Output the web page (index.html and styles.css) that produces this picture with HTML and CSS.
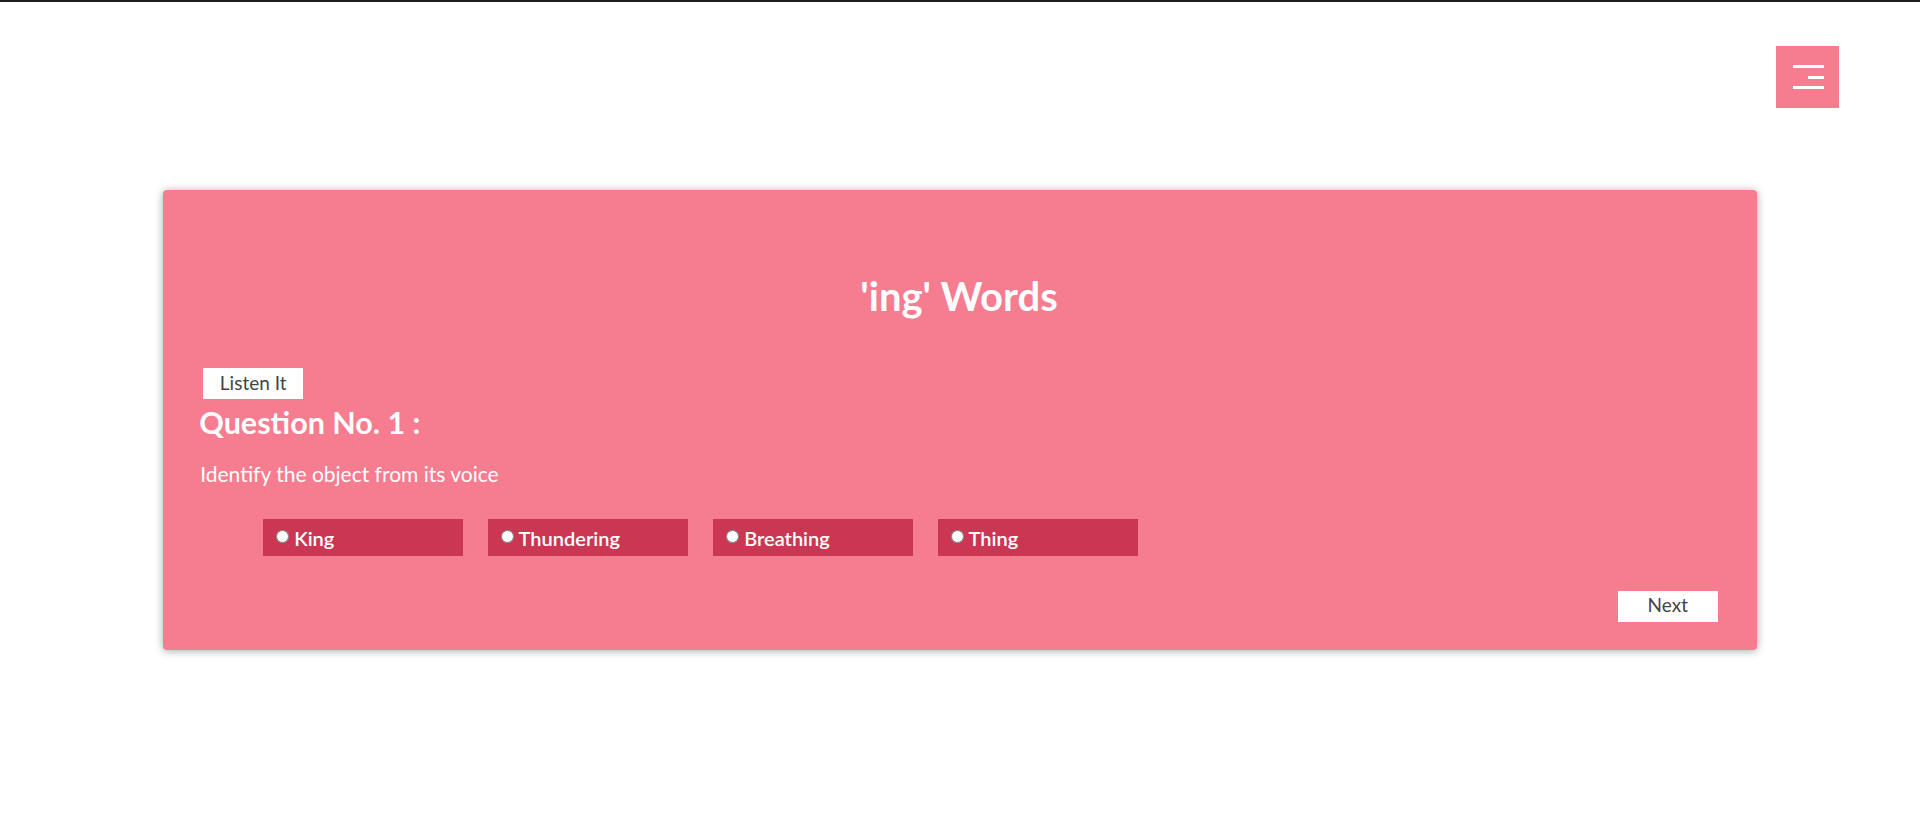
FILE: index.html
```html
<!DOCTYPE html>
<html lang="en">
<head>
<meta charset="utf-8">
<title>'ing' Words</title>
<link rel="stylesheet" href="styles.css">
</head>
<body>
<header class="topbar">
  <button class="menu-btn" aria-label="Menu">
    <svg width="62" height="62" viewBox="0 0 62 62">
      <line x1="16" y1="20.5" x2="47" y2="20.5" stroke="#fff" stroke-width="3"/>
      <line x1="31" y1="31.5" x2="47" y2="31.5" stroke="#fff" stroke-width="3"/>
      <line x1="16" y1="41.5" x2="47" y2="41.5" stroke="#fff" stroke-width="3"/>
    </svg>
  </button>
</header>
<main class="card">
  <h1 class="title">'ing' Words</h1>
  <button class="btn listen-btn">Listen It</button>
  <h2 class="question">Question No. 1 :</h2>
  <p class="prompt">Identify the object from its voice</p>
  <div class="options">
    <label class="option"><input type="radio" name="q1"> King</label>
    <label class="option"><input type="radio" name="q1"> Thundering</label>
    <label class="option"><input type="radio" name="q1"> Breathing</label>
    <label class="option"><input type="radio" name="q1"> Thing</label>
  </div>
  <div class="actions">
    <button class="btn next-btn">Next</button>
  </div>
</main>
</body>
</html>
```
FILE: styles.css
```css
* { box-sizing: border-box; }

html, body {
  margin: 0;
  padding: 0;
  background: #ffffff;
}

body {
  border-top: 2px solid #1e1e1e;
  font-family: Lato, "Open Sans", sans-serif;
  min-height: 823px;
}

.topbar {
  display: flex;
  justify-content: flex-end;
  padding: 44px 81px 0 0;
}

.menu-btn {
  width: 63px;
  height: 62px;
  padding: 0;
  border: none;
  background: #f67c8f;
  display: flex;
  align-items: center;
  justify-content: center;
  cursor: pointer;
}

.menu-btn svg { display: block; }

.card {
  width: 83%;
  margin: 82px auto 0;
  background: #f67c8f;
  border-radius: 4px;
  box-shadow: 0 1px 9px rgba(0, 0, 0, 0.35);
  padding: 82px 39px 28px 37px;
  color: #ffffff;
}

.title {
  margin: 0;
  font-size: 40px;
  line-height: 1.2;
  font-weight: 700;
  text-align: center;
}

.btn {
  background: #ffffff;
  color: #444444;
  border: none;
  height: 31px;
  width: 100px;
  padding: 0 0 3px;
  font-family: Lato, "Open Sans", sans-serif;
  font-size: 19px;
  cursor: pointer;
}

.listen-btn {
  display: block;
  margin: 48px 0 0 3px;
}

.question {
  margin: 5px 0 0 -1px;
  font-size: 30.5px;
  line-height: 1.2;
  font-weight: 700;
}

.prompt {
  margin: 20px 0 0;
  font-size: 21px;
  line-height: 1.2;
}

.options {
  display: flex;
  gap: 25px;
  margin: 33px 0 0 63px;
}

.option {
  width: 200px;
  height: 37px;
  background: #cb3652;
  padding: 2px 0 0 8px;
  line-height: 35px;
  font-size: 20px;
  font-weight: 600;
  color: #ffffff;
}

.option input {
  margin: 0 0 0 5px;
  width: 13px;
  height: 13px;
  vertical-align: 3px;
}

.actions {
  display: flex;
  justify-content: flex-end;
  margin-top: 35px;
}
```
